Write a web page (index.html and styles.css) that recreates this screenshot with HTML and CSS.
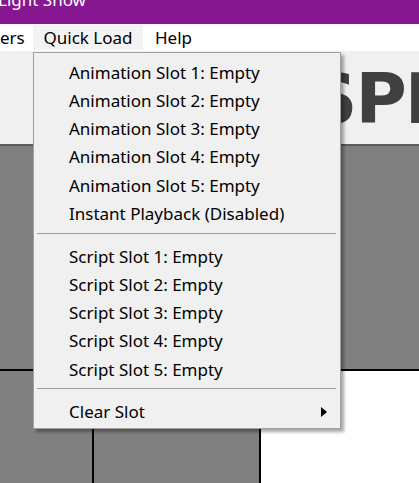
FILE: index.html
```html
<!DOCTYPE html>
<html>
<head>
<meta charset="utf-8">
<link rel="stylesheet" href="styles.css">
</head>
<body>
<div class="window">
  <div class="titlebar"><span class="title">Light Show</span></div>
  <nav class="menubar">
    <span class="mb-item mb-cut">ers</span>
    <span class="mb-item mb-open">Quick Load</span>
    <span class="mb-item mb-help">Help</span>
  </nav>
  <div class="banner"><span class="logo">SPIN</span></div>
  <div class="board">
    <div class="board-top"></div>
    <div class="board-bottom">
      <div class="cell cell-a"></div>
      <div class="cell cell-b"></div>
      <div class="cell cell-c"></div>
    </div>
  </div>

  <div class="dropdown">
    <div class="item">Animation Slot 1: Empty</div>
    <div class="item">Animation Slot 2: Empty</div>
    <div class="item">Animation Slot 3: Empty</div>
    <div class="item">Animation Slot 4: Empty</div>
    <div class="item">Animation Slot 5: Empty</div>
    <div class="item">Instant Playback (Disabled)</div>
    <div class="sep"></div>
    <div class="item">Script Slot 1: Empty</div>
    <div class="item">Script Slot 2: Empty</div>
    <div class="item">Script Slot 3: Empty</div>
    <div class="item">Script Slot 4: Empty</div>
    <div class="item">Script Slot 5: Empty</div>
    <div class="sep"></div>
    <div class="item item-sub">Clear Slot<span class="arrow"></span></div>
  </div>
</div>
</body>
</html>
```
FILE: styles.css
```css
html, body {
  margin: 0;
  padding: 0;
}
body {
  width: 419px;
  height: 483px;
  overflow: hidden;
  background: #ffffff;
  font-family: "Noto Sans", "Open Sans", sans-serif;
  font-size: 17px;
  color: #000;
}
.window {
  position: relative;
  width: 419px;
  height: 483px;
  display: flex;
  flex-direction: column;
}
.titlebar {
  height: 24px;
  flex: none;
  background: #861790;
  color: #fff;
  overflow: hidden;
  line-height: 24px;
  white-space: nowrap;
}
.title {
  display: block;
  margin: -12px 0 0 -2px;
}
.menubar {
  height: 27px;
  flex: none;
  display: flex;
  align-items: stretch;
  background: #fff;
  line-height: 25px;
  white-space: nowrap;
  padding: 1px 0;
  box-sizing: border-box;
}
.mb-item {
  display: block;
}
.mb-cut {
  width: 33px;
}
.mb-open {
  width: 110px;
  text-align: center;
  background: #f3f3f3;
}
.mb-help {
  padding-left: 12px;
}
.banner {
  height: 93px;
  flex: none;
  background: #f0f0f0;
  overflow: hidden;
  padding: 13px 0 0 307px;
  box-sizing: border-box;
  white-space: nowrap;
}
.logo {
  font-family: "DejaVu Sans", "Liberation Sans", sans-serif;
  font-weight: bold;
  font-size: 70px;
  line-height: 70px;
  letter-spacing: -2px;
  color: #404040;
  display: block;
}
.board {
  flex: 1;
  display: flex;
  flex-direction: column;
  background: #808080;
}
.board-top {
  height: 223px;
  border-top: 2px solid #5c5c5c;
  border-bottom: 2px solid #000;
  flex: none;
}
.board-bottom {
  flex: 1;
  display: flex;
}
.cell-a {
  width: 92px;
  border-right: 2px solid #000;
}
.cell-b {
  width: 165px;
  border-right: 2px solid #000;
}
.cell-c {
  flex: 1;
  background: #fff;
}
.dropdown {
  position: absolute;
  left: 33px;
  top: 52px;
  width: 308px;
  box-sizing: border-box;
  background: #f0f0f0;
  border: 1px solid #a0a0a0;
  padding: 5px 0 2px;
  box-shadow: 3px 3px 3px rgba(0, 0, 0, 0.35);
  white-space: nowrap;
}
.item {
  height: 28.25px;
  display: flex;
  align-items: center;
  justify-content: space-between;
  padding: 0 13px 0 35px;
}
.sep {
  height: 14.5px;
  box-sizing: border-box;
  padding: 5px 4px 0 3px;
}
.sep::before {
  content: "";
  display: block;
  height: 1px;
  background: #a0a0a0;
}
.arrow {
  width: 0;
  height: 0;
  border-left: 6px solid #000;
  border-top: 5px solid transparent;
  border-bottom: 5px solid transparent;
}
```
